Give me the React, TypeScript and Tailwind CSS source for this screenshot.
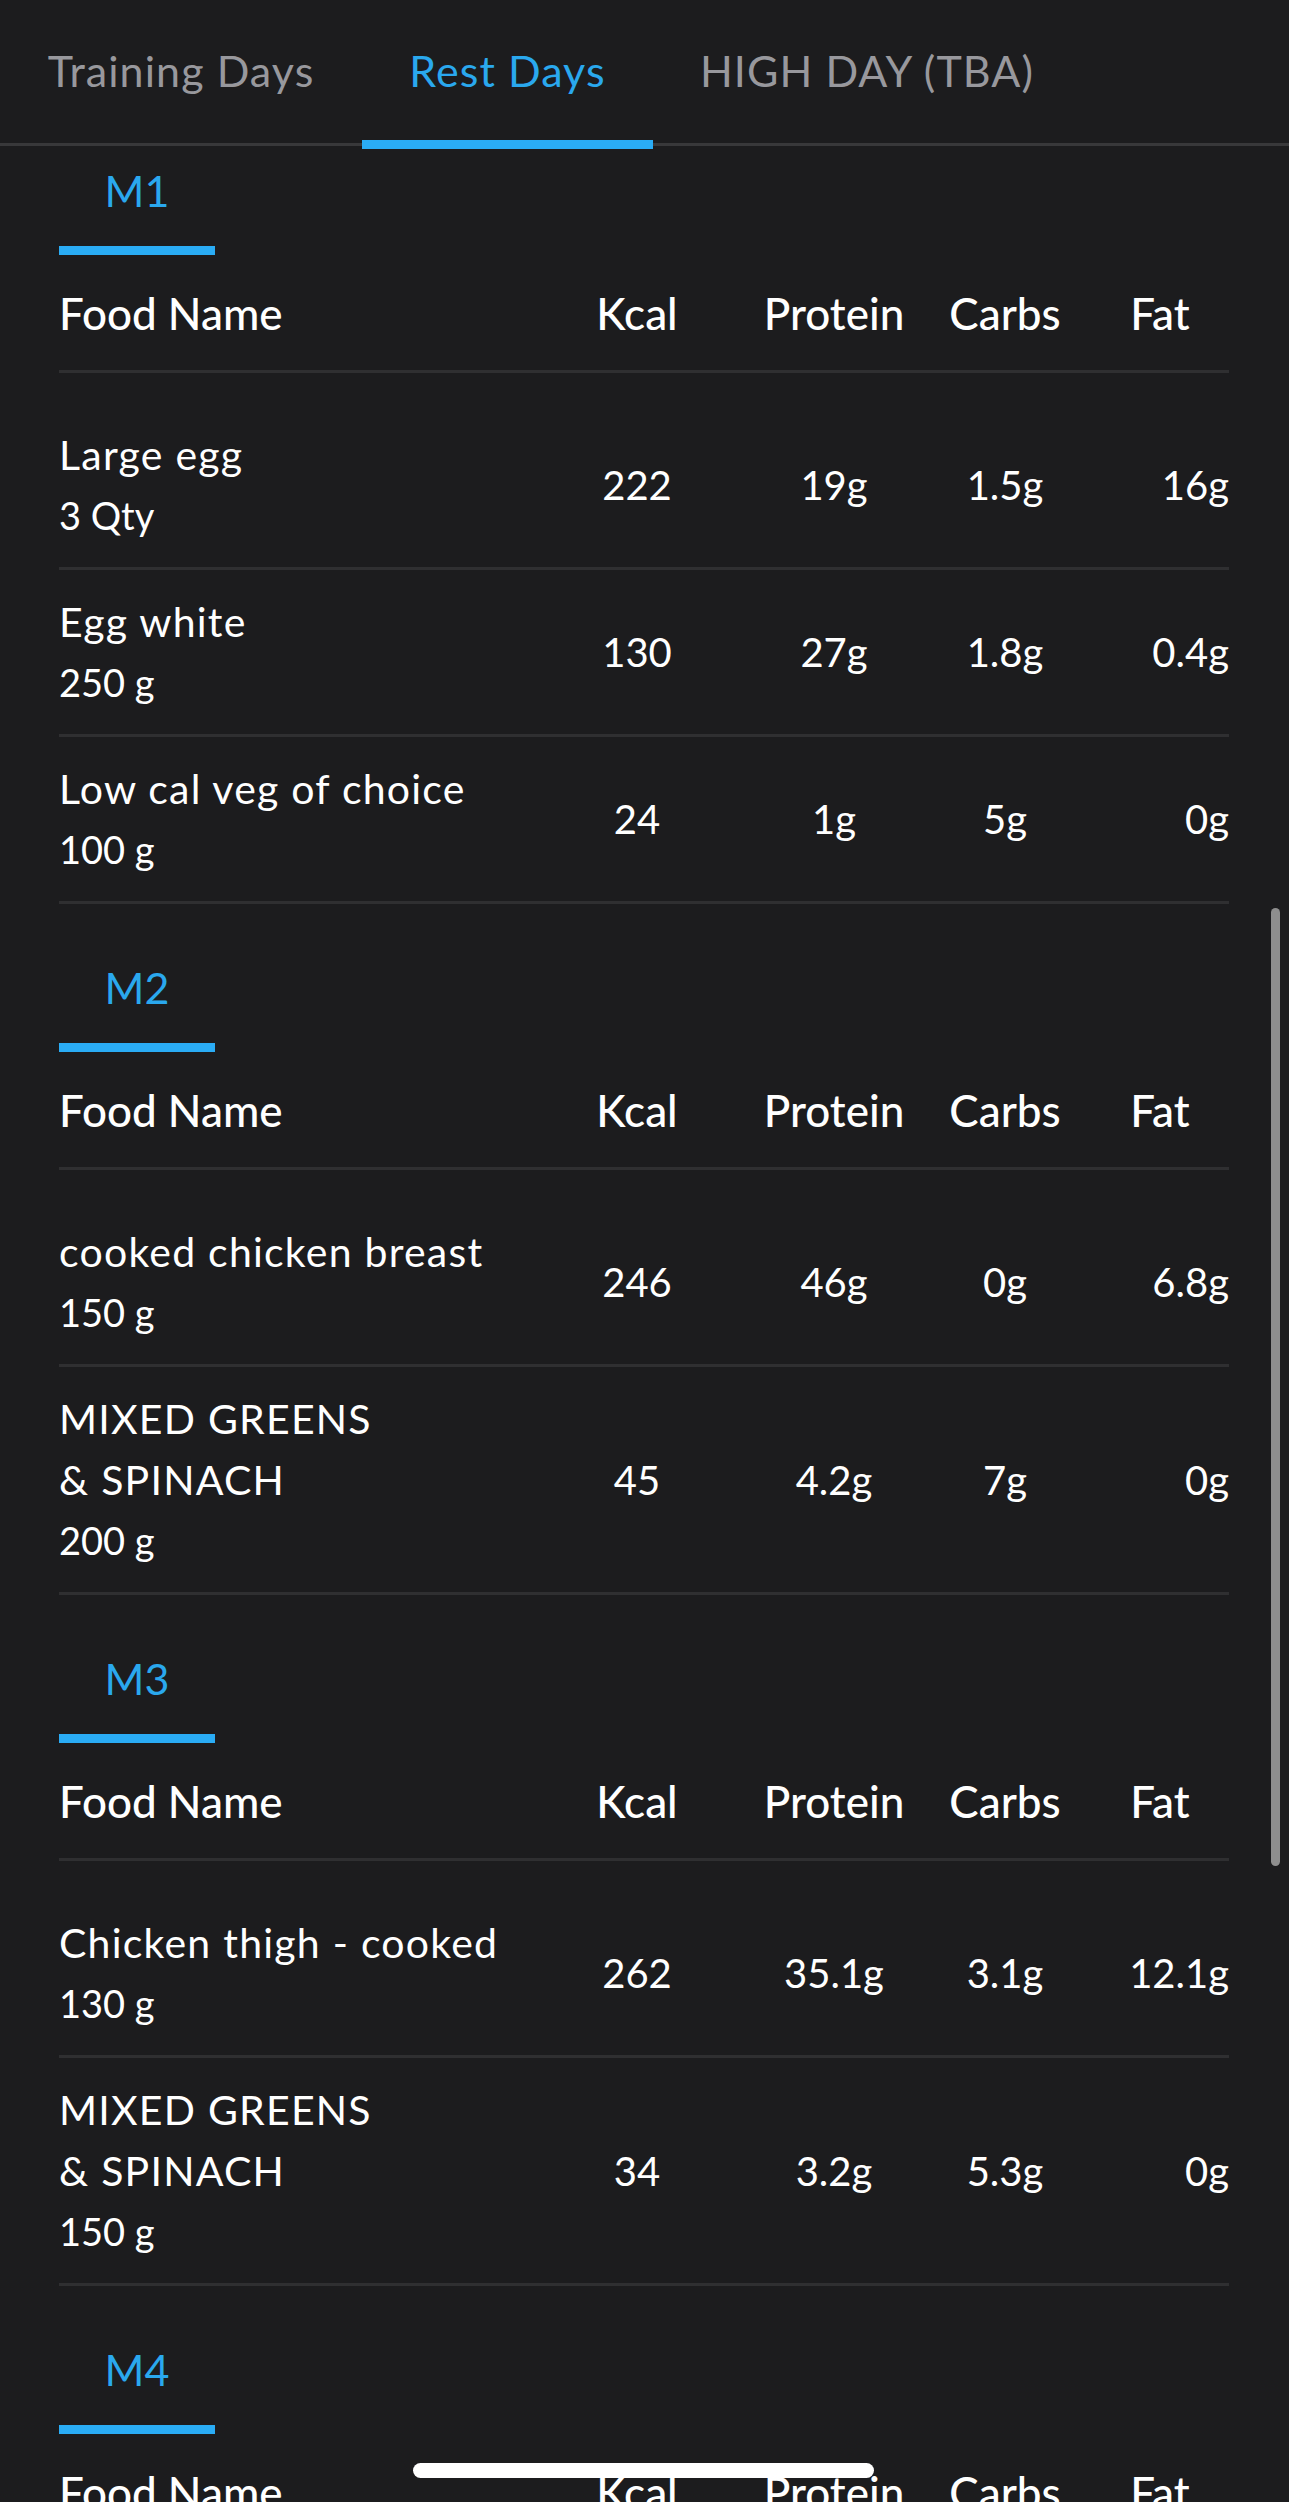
import React from "react";

type Row = { name: string[]; qty: string; kcal: string; protein: string; carbs: string; fat: string };
type Meal = { title: string; rows: Row[] };

const meals: Meal[] = [
  {
    title: "M1",
    rows: [
      { name: ["Large egg"], qty: "3 Qty", kcal: "222", protein: "19g", carbs: "1.5g", fat: "16g" },
      { name: ["Egg white"], qty: "250 g", kcal: "130", protein: "27g", carbs: "1.8g", fat: "0.4g" },
      { name: ["Low cal veg of choice"], qty: "100 g", kcal: "24", protein: "1g", carbs: "5g", fat: "0g" },
    ],
  },
  {
    title: "M2",
    rows: [
      { name: ["cooked chicken breast"], qty: "150 g", kcal: "246", protein: "46g", carbs: "0g", fat: "6.8g" },
      { name: ["MIXED GREENS", "& SPINACH"], qty: "200 g", kcal: "45", protein: "4.2g", carbs: "7g", fat: "0g" },
    ],
  },
  {
    title: "M3",
    rows: [
      { name: ["Chicken thigh - cooked"], qty: "130 g", kcal: "262", protein: "35.1g", carbs: "3.1g", fat: "12.1g" },
      { name: ["MIXED GREENS", "& SPINACH"], qty: "150 g", kcal: "34", protein: "3.2g", carbs: "5.3g", fat: "0g" },
    ],
  },
  {
    title: "M4",
    rows: [
      { name: ["Rice cakes"], qty: "2 Qty", kcal: "70", protein: "1.4g", carbs: "14.6g", fat: "0.6g" },
    ],
  },
];

function MealSection({ meal, first }: { meal: Meal; first: boolean }) {
  return (
    <section className={first ? "pt-[14px]" : "pt-[53px]"}>
      <div className="ml-[59px] w-[156px]">
        <div className="text-center text-[43px] leading-[61px] text-[#2aa8ee]">{meal.title}</div>
        <div className="mt-[25px] h-[9px] w-[156px] bg-[#2aacf5]" />
      </div>
      <div className="mx-[60px] ml-[59px]">
        <div className="grid h-[118px] grid-cols-[466px_224px_170px_172px_138px] items-center border-b-[3px] border-[#2f2f31] text-[44px] font-medium text-white">
          <div>Food Name</div>
          <div className="text-center">Kcal</div>
          <div className="text-center">Protein</div>
          <div className="text-center">Carbs</div>
          <div className="text-center">Fat</div>
        </div>
        <div className="mt-[30px]">
          {meal.rows.map((r, i) => (
            <div
              key={i}
              className="grid grid-cols-[466px_224px_170px_172px_138px] items-center border-b-[3px] border-[#2f2f31] py-[21px] text-white"
            >
              <div className="leading-[61px]">
                {r.name.map((n, j) => (
                  <div key={j} className="text-[41px] tracking-[0.03em]">{n}</div>
                ))}
                <div className="text-[38px]">{r.qty}</div>
              </div>
              <div className="text-center text-[40px]">{r.kcal}</div>
              <div className="text-center text-[40px]">{r.protein}</div>
              <div className="text-center text-[40px]">{r.carbs}</div>
              <div className="text-right text-[40px]">{r.fat}</div>
            </div>
          ))}
        </div>
      </div>
    </section>
  );
}

export default function App() {
  return (
    <div className="relative h-[2502px] w-[1289px] overflow-hidden bg-[#1c1c1e] font-['Lato',sans-serif]">
      <div className="flex h-[146px] border-b-[3px] border-[#38383a] text-[43px] tracking-[0.025em]">
        <div className="relative flex w-[362px] items-center justify-center text-[#98989d]">Training Days</div>
        <div className="relative flex w-[291px] items-center justify-center text-[#2aa8ee]">
          Rest Days
          <div className="absolute bottom-[-6px] left-0 h-[9px] w-full bg-[#2aacf5]" />
        </div>
        <div className="relative flex w-[428px] items-center justify-center text-[#98989d]">HIGH DAY (TBA)</div>
      </div>
      <div>
        {meals.map((m, i) => (
          <MealSection key={m.title} meal={m} first={i === 0} />
        ))}
      </div>
      <div className="absolute left-[1271px] top-[908px] h-[958px] w-[9px] rounded-full bg-[#8e8e8e]" />
      <div className="absolute left-[413px] top-[2463px] h-[15px] w-[461px] rounded-full bg-white" />
    </div>
  );
}
